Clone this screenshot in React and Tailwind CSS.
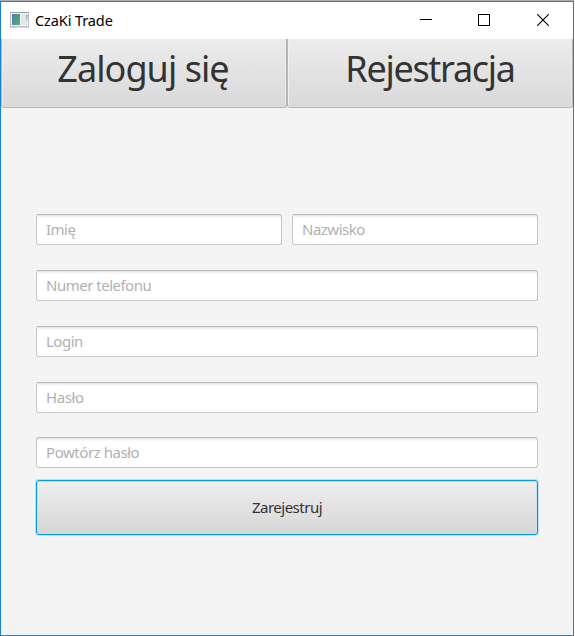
function AppIcon() {
  return (
    <svg width="20" height="16" viewBox="0 0 20 16" className="shrink-0">
      <defs>
        <linearGradient id="screen" x1="0" y1="0" x2="1" y2="1">
          <stop offset="0" stopColor="#4a7fa5" />
          <stop offset="1" stopColor="#55b077" />
        </linearGradient>
        <linearGradient id="side" x1="0" y1="0" x2="0" y2="1">
          <stop offset="0" stopColor="#58b578" />
          <stop offset="1" stopColor="#e4e9ee" />
        </linearGradient>
      </defs>
      <rect x="0.5" y="0.5" width="18" height="14" fill="#f1f3f5" stroke="#b9bdc2" />
      <rect x="0" y="0" width="19" height="1" fill="#9ba1aa" />
      <rect x="2" y="2" width="8" height="11" fill="url(#screen)" />
      <rect x="11" y="2" width="6" height="11" fill="#e2e7ec" />
      <rect x="16" y="3" width="1.5" height="7" fill="url(#side)" />
      <rect x="0" y="15" width="19" height="1" fill="#d5d7d9" />
    </svg>
  );
}

function TitleBar() {
  return (
    <header className="flex h-[37px] shrink-0 items-start justify-between bg-white">
      <div className="flex items-start gap-[5px] pl-[9px]">
        <div className="pt-[10px]">
          <AppIcon />
        </div>
        <h1 className="pt-[8px] text-[14.5px] leading-5 tracking-[-0.1px] text-black">CzaKi Trade</h1>
      </div>
      <div className="flex items-start pt-[12px]">
        <button aria-label="Minimalizuj" className="flex w-[58px] justify-center">
          <svg width="12" height="12" viewBox="0 0 12 12">
            <rect y="5" width="12" height="1" fill="#000" />
          </svg>
        </button>
        <button aria-label="Maksymalizuj" className="flex w-[58px] justify-center">
          <svg width="12" height="12" viewBox="0 0 12 12">
            <rect x="0.5" y="0.5" width="11" height="11" fill="none" stroke="#000" />
          </svg>
        </button>
        <button aria-label="Zamknij" className="flex w-[60px] justify-center">
          <svg width="12" height="12" viewBox="0 0 12 12">
            <path d="M0.3 0.3L11.7 11.7M11.7 0.3L0.3 11.7" stroke="#000" strokeWidth="1.15" />
          </svg>
        </button>
      </div>
    </header>
  );
}

function Tab({ children, className }) {
  return (
    <button
      className={
        "flex h-[69px] w-[286px] items-start justify-center rounded-b-[3px] border border-t-0 border-[#b5b5b5] bg-linear-to-b from-[#ececec] to-[#d9d9d9] text-[36px] leading-[49px] whitespace-nowrap text-[#333] shadow-[inset_1px_0_0_#f0f0f0,inset_-1px_0_0_#e9e9e9,inset_0_-1px_0_#dedede] " +
        className
      }
    >
      {children}
    </button>
  );
}

function Field({ placeholder, className = "" }) {
  return (
    <input
      placeholder={placeholder}
      className={
        "block h-[31px] w-full min-w-0 rounded-[3px] border border-[#c8c8c8] border-t-[#b8b8b8] bg-white px-[9px] pb-[2px] text-[15px] shadow-[inset_0_3px_3px_-2px_#dcdcdc] outline-none placeholder:text-[#b1b1b1] placeholder:opacity-100 " +
        className
      }
    />
  );
}

export default function App() {
  return (
    <div className="h-[636px] w-[575px] overflow-hidden bg-white font-['Noto_Sans','Open_Sans',sans-serif]">
      <div className="h-px w-[574px] bg-[#a5adb5]" />
      <div className="flex h-[635px] w-[574px] flex-col border border-[#1883d7] bg-[#f4f4f4]">
        <TitleBar />
        <nav className="flex">
          <Tab className="pt-[5px] pr-[2px] tracking-[-0.95px]">Zaloguj się</Tab>
          <Tab className="pt-[5px] tracking-[-1.3px]">Rejestracja</Tab>
        </nav>
        <form className="flex flex-col px-[35px] pt-[106px]">
          <div className="flex gap-[10px]">
            <Field placeholder="Imię" className="tracking-[-0.5px]" />
            <Field placeholder="Nazwisko" className="tracking-[-0.5px]" />
          </div>
          <Field placeholder="Numer telefonu" className="mt-[25px] tracking-[-0.5px]" />
          <Field placeholder="Login" className="mt-[25px] tracking-[-0.5px]" />
          <Field placeholder="Hasło" className="mt-[25px] tracking-[-0.4px]" />
          <Field placeholder="Powtórz hasło" className="mt-[24px] tracking-[-0.45px]" />
          <button
            type="button"
            className="mt-[12px] h-[55px] rounded-[3px] border border-[#039ed3] bg-linear-to-b from-[#efefef] to-[#d6d6d6] text-[15px] tracking-[-0.5px] text-[#333] shadow-[0_0_0_1px_#b8e0ee,inset_0_0_0_1px_#c9dfe7]"
          >
            Zarejestruj
          </button>
        </form>
      </div>
    </div>
  );
}
